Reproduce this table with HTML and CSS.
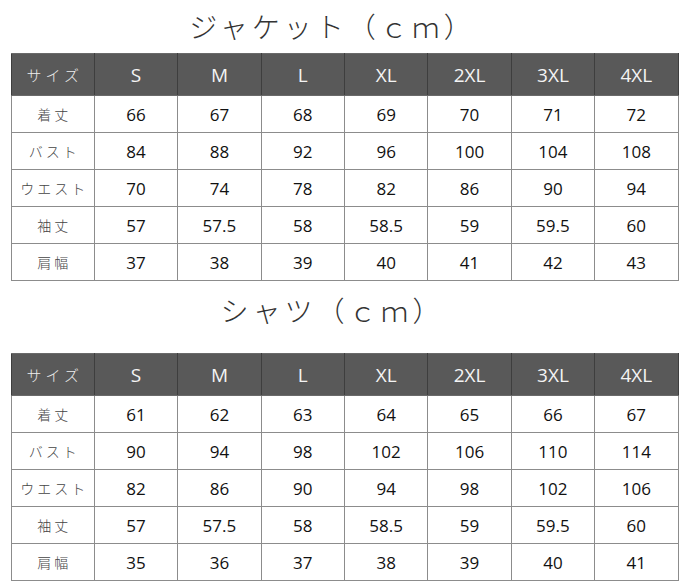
FILE: index.html
```html
<!DOCTYPE html>
<html lang="ja">
<head>
<meta charset="utf-8">
<title>サイズ表</title>
<link rel="stylesheet" href="styles.css">
</head>
<body>
<div class="page">
  <h2 class="title title-first">ジャケット（ｃｍ）</h2>
  <table class="size-table">
    <thead>
      <tr><th class="label">サイズ</th><th>S</th><th>M</th><th>L</th><th>XL</th><th>2XL</th><th>3XL</th><th>4XL</th></tr>
    </thead>
    <tbody>
      <tr><td class="label">着丈</td><td>66</td><td>67</td><td>68</td><td>69</td><td>70</td><td>71</td><td>72</td></tr>
      <tr><td class="label">バスト</td><td>84</td><td>88</td><td>92</td><td>96</td><td>100</td><td>104</td><td>108</td></tr>
      <tr><td class="label">ウエスト</td><td>70</td><td>74</td><td>78</td><td>82</td><td>86</td><td>90</td><td>94</td></tr>
      <tr><td class="label">袖丈</td><td>57</td><td>57.5</td><td>58</td><td>58.5</td><td>59</td><td>59.5</td><td>60</td></tr>
      <tr><td class="label">肩幅</td><td>37</td><td>38</td><td>39</td><td>40</td><td>41</td><td>42</td><td>43</td></tr>
    </tbody>
  </table>
  <h2 class="title title-second">シャツ（ｃｍ）</h2>
  <table class="size-table">
    <thead>
      <tr><th class="label">サイズ</th><th>S</th><th>M</th><th>L</th><th>XL</th><th>2XL</th><th>3XL</th><th>4XL</th></tr>
    </thead>
    <tbody>
      <tr><td class="label">着丈</td><td>61</td><td>62</td><td>63</td><td>64</td><td>65</td><td>66</td><td>67</td></tr>
      <tr><td class="label">バスト</td><td>90</td><td>94</td><td>98</td><td>102</td><td>106</td><td>110</td><td>114</td></tr>
      <tr><td class="label">ウエスト</td><td>82</td><td>86</td><td>90</td><td>94</td><td>98</td><td>102</td><td>106</td></tr>
      <tr><td class="label">袖丈</td><td>57</td><td>57.5</td><td>58</td><td>58.5</td><td>59</td><td>59.5</td><td>60</td></tr>
      <tr><td class="label">肩幅</td><td>35</td><td>36</td><td>37</td><td>38</td><td>39</td><td>40</td><td>41</td></tr>
    </tbody>
  </table>
</div>
</body>
</html>
```
FILE: styles.css
```css
html, body {
  margin: 0;
  padding: 0;
  background: #ffffff;
}

.page {
  width: 689px;
  display: flex;
  flex-direction: column;
  align-items: center;
}

.title {
  margin: 0;
  font-family: "Noto Sans CJK JP", sans-serif;
  font-weight: 300;
  font-size: 28px;
  letter-spacing: 4px;
  color: #333333;
  text-align: center;
  line-height: 1;
  display: flex;
  align-items: center;
  justify-content: center;
  padding-right: 24px;
}

.title-first {
  height: 51px;
  padding-bottom: 2px;
}

.title-second {
  height: 58px;
  padding-bottom: 14px;
}

.size-table {
  width: 668px;
  border-collapse: collapse;
  table-layout: fixed;
  font-family: "Open Sans", "Noto Sans", sans-serif;
}

.size-table th {
  height: 41px;
  padding: 0;
  background: #595959;
  color: #f4f4f4;
  font-size: 19px;
  font-weight: 400;
  text-align: center;
  border-left: 1px solid #3e3e3e;
  border-right: 1px solid #3e3e3e;
  border-top: 1px solid #6a6a6a;
  border-bottom: 1px solid #6a6a6a;
}

.size-table td {
  height: 36px;
  padding: 0;
  font-size: 17px;
  font-weight: 400;
  color: #111111;
  text-align: center;
  border: 1px solid #8c8c8c;
}

.size-table th.label {
  font-family: "Noto Sans CJK JP", sans-serif;
  font-weight: 300;
  font-size: 15px;
  letter-spacing: 4px;
  color: #eeeeee;
  padding-left: 4px;
}

.size-table td.label {
  font-family: "Noto Sans CJK JP", sans-serif;
  font-weight: 300;
  font-size: 14px;
  letter-spacing: 3px;
  color: #444444;
  padding-left: 3px;
}
```
